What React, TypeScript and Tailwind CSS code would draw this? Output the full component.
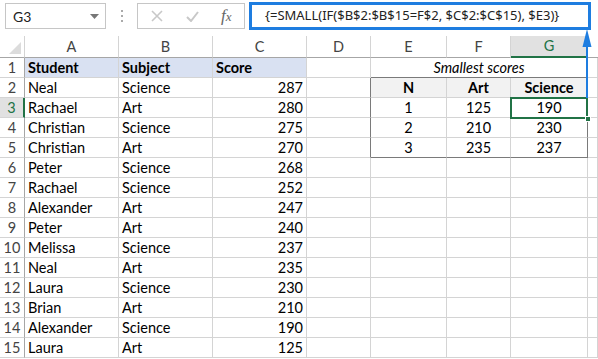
import React from "react";

const COLS = [
  { key: "A", w: "w-[94px]" },
  { key: "B", w: "w-[94px]" },
  { key: "C", w: "w-[94px]" },
  { key: "D", w: "w-[64px]" },
  { key: "E", w: "w-[76px]" },
  { key: "F", w: "w-[64px]" },
  { key: "G", w: "w-[77px]" },
];

const DATA: [string, string, number][] = [
  ["Neal", "Science", 287],
  ["Rachael", "Art", 280],
  ["Christian", "Science", 275],
  ["Christian", "Art", 270],
  ["Peter", "Science", 268],
  ["Rachael", "Science", 252],
  ["Alexander", "Art", 247],
  ["Peter", "Art", 240],
  ["Melissa", "Science", 237],
  ["Neal", "Art", 235],
  ["Laura", "Science", 230],
  ["Brian", "Art", 210],
  ["Alexander", "Science", 190],
  ["Laura", "Art", 125],
];

const SMALLEST: [number, number, number][] = [
  [1, 125, 190],
  [2, 210, 230],
  [3, 235, 237],
];

const cell = "h-full shrink-0 border-r border-b border-[#d4d4d4] px-[3px] flex items-center whitespace-nowrap";

function RowHead({ n, active }: { n: number; active?: boolean }) {
  return (
    <div
      className={
        active
          ? "w-[25px] h-full shrink-0 flex items-center justify-center bg-[#e1e1e1] text-[#217346] border-b border-[#d4d4d4] border-r-2 border-r-[#217346]"
          : "w-[25px] h-full shrink-0 flex items-center justify-center text-[#444] border-b border-[#d4d4d4] border-r border-r-[#a6a6a6]"
      }
    >
      {n}
    </div>
  );
}

function Toolbar() {
  return (
    <div className="relative h-[36px] flex items-start pt-[3px] bg-white">
      <div className="ml-[5px] w-[101px] h-[26px] border border-[#c6c6c6] flex items-center justify-between pl-[7px] pr-[6px] text-[14px] text-[#222]">
        <span>G3</span>
        <svg width="9" height="5" viewBox="0 0 9 5">
          <path d="M0 0h9L4.5 5z" fill="#777" />
        </svg>
      </div>
      <div className="w-[31px] h-[26px] flex flex-col items-center justify-center gap-[3px]">
        <div className="w-[2px] h-[2px] bg-[#aaa]" />
        <div className="w-[2px] h-[2px] bg-[#aaa]" />
        <div className="w-[2px] h-[2px] bg-[#aaa]" />
      </div>
      <div className="w-[108px] h-[26px] border border-[#c6c6c6] flex items-center">
        <svg className="ml-[13px]" width="12" height="12" viewBox="0 0 12 12">
          <path d="M1 1l10 10M11 1L1 11" stroke="#c8c8c8" strokeWidth="1.6" />
        </svg>
        <svg className="ml-[23px]" width="13" height="11" viewBox="0 0 13 11">
          <path d="M1 6l4 4L12 1" stroke="#c8c8c8" strokeWidth="2" fill="none" />
        </svg>
        <span className="ml-[22px] italic text-[17px] text-[#666] font-['Liberation_Serif',serif]">
          f<span className="text-[13px]">x</span>
        </span>
      </div>
      <div className="ml-[4px] -mt-[1px] w-[342px] h-[28px] border-[3px] border-[#1e7de0] flex items-center pl-[13px] text-[13px] text-[#222] font-['Noto_Sans',sans-serif]">
        {"{=SMALL(IF($B$2:$B$15=F$2, $C$2:$C$15), $E3)}"}
      </div>
    </div>
  );
}

function ColHeader() {
  return (
    <div className="flex h-[22px] text-[#444]">
      <div className="w-[25px] shrink-0 flex items-end justify-end pr-[3px] pb-[3px] border-b border-[#a6a6a6] border-r border-r-[#d4d4d4]">
        <svg width="12" height="12" viewBox="0 0 12 12">
          <path d="M12 0v12H0z" fill="#dcdcdc" />
        </svg>
      </div>
      {COLS.map((c) =>
        c.key === "G" ? (
          <div
            key={c.key}
            className={`${c.w} shrink-0 flex items-center justify-center bg-[#e1e1e1] text-[#217346] border-r border-[#d4d4d4] border-b-2 border-b-[#217346]`}
          >
            {c.key}
          </div>
        ) : (
          <div
            key={c.key}
            className={`${c.w} shrink-0 flex items-center justify-center border-r border-[#d4d4d4] border-b border-b-[#a6a6a6]`}
          >
            {c.key}
          </div>
        )
      )}
      <div className="flex-1 border-b border-[#a6a6a6]" />
    </div>
  );
}

export default function App() {
  return (
    <div className="relative w-[598px] h-[359px] overflow-hidden bg-white text-[14.5px] text-black font-['Lato',sans-serif]">
      <Toolbar />
      <ColHeader />

      {/* row 1 */}
      <div className="flex h-[20px]">
        <RowHead n={1} />
        <div className={`${cell} w-[94px] bg-[#d9e1f2] font-bold`}>Student</div>
        <div className={`${cell} w-[94px] bg-[#d9e1f2] font-bold`}>Subject</div>
        <div className={`${cell} w-[94px] bg-[#d9e1f2] font-bold`}>Score</div>
        <div className={`${cell} w-[64px]`} />
        <div className="w-[217px] h-full shrink-0 flex items-center justify-center italic border-r border-[#d4d4d4] border-b border-b-[#7a7a7a]">
          Smallest scores
        </div>
        <div className={`${cell} flex-1`} />
      </div>

      {DATA.map(([name, subj, score], i) => {
        const r = i + 2;
        const s = r === 2 ? null : SMALLEST[r - 3];
        const inTable = r >= 2 && r <= 5;
        const last = r === 5;
        return (
          <div key={r} className="flex h-[20px]">
            <RowHead n={r} active={r === 3} />
            <div className={`${cell} w-[94px]`}>{name}</div>
            <div className={`${cell} w-[94px]`}>{subj}</div>
            <div className={`${cell} w-[94px] justify-end`}>{score}</div>
            <div className={inTable ? `${cell} w-[64px] border-r-[#7a7a7a]` : `${cell} w-[64px]`} />
            {r === 2 ? (
              <>
                <div className={`${cell} w-[76px] justify-center bg-[#f2f2f2] font-bold`}>N</div>
                <div className={`${cell} w-[64px] justify-center bg-[#f2f2f2] font-bold`}>Art</div>
                <div className={`${cell} w-[77px] justify-center bg-[#f2f2f2] font-bold border-r-[#7a7a7a]`}>Science</div>
              </>
            ) : s ? (
              <>
                <div className={last ? `${cell} w-[76px] justify-center border-b-[#7a7a7a]` : `${cell} w-[76px] justify-center`}>{s[0]}</div>
                <div className={last ? `${cell} w-[64px] justify-center border-b-[#7a7a7a]` : `${cell} w-[64px] justify-center`}>{s[1]}</div>
                <div
                  className={
                    last
                      ? `${cell} w-[77px] justify-center border-r-[#7a7a7a] border-b-[#7a7a7a]`
                      : `${cell} w-[77px] justify-center border-r-[#7a7a7a]`
                  }
                >
                  {s[2]}
                </div>
              </>
            ) : (
              <>
                <div className={`${cell} w-[76px]`} />
                <div className={`${cell} w-[64px]`} />
                <div className={`${cell} w-[77px]`} />
              </>
            )}
            <div className={`${cell} flex-1`} />
          </div>
        );
      })}

      {/* selected cell G3 */}
      <div className="absolute left-[510px] top-[97px] w-[78px] h-[22px] border-2 border-[#217346] pointer-events-none" />
      <div className="absolute left-[585px] top-[116px] w-[6px] h-[6px] bg-[#217346] border border-white" />

      {/* arrow from G3 to formula bar */}
      <svg className="absolute left-[580px] top-[26px]" width="16" height="72" viewBox="0 0 16 72">
        <path d="M7 14v58" stroke="#1e7de0" strokeWidth="2" />
        <path d="M2.5 21L7 3l4.5 18z" fill="#1e7de0" />
      </svg>
    </div>
  );
}
